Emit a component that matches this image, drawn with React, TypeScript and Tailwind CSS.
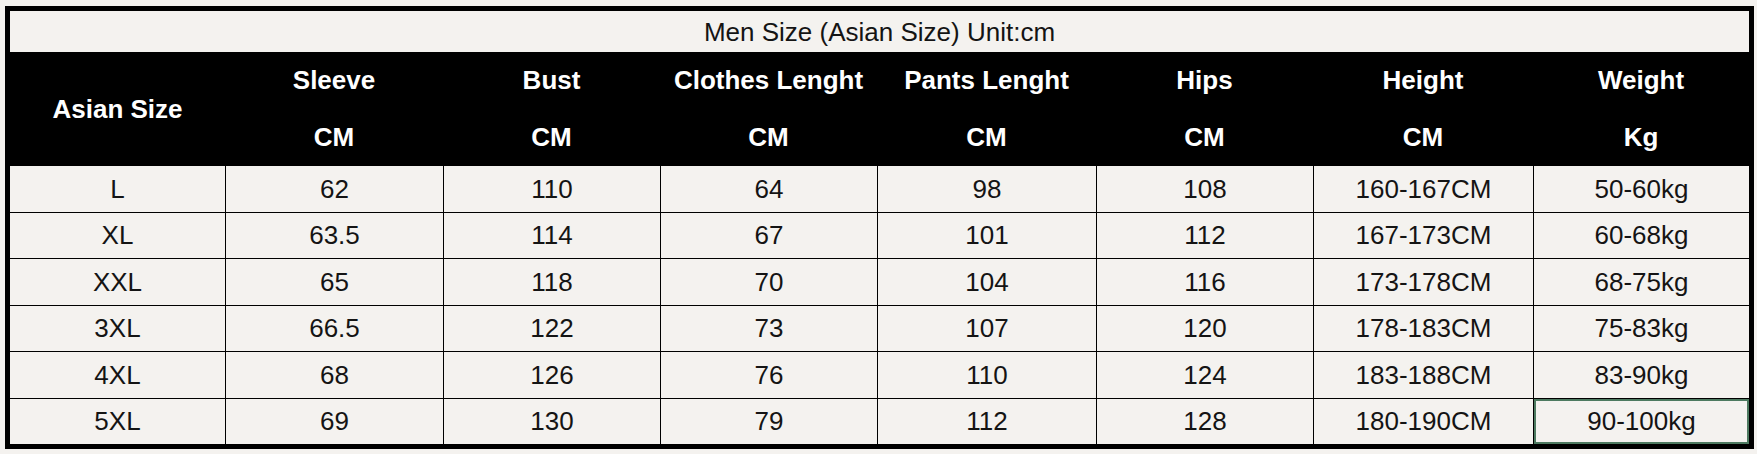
const columns = [
  { name: "Sleeve", unit: "CM" },
  { name: "Bust", unit: "CM" },
  { name: "Clothes Lenght", unit: "CM" },
  { name: "Pants Lenght", unit: "CM" },
  { name: "Hips", unit: "CM" },
  { name: "Height", unit: "CM" },
  { name: "Weight", unit: "Kg" },
];

const rows = [
  ["L", "62", "110", "64", "98", "108", "160-167CM", "50-60kg"],
  ["XL", "63.5", "114", "67", "101", "112", "167-173CM", "60-68kg"],
  ["XXL", "65", "118", "70", "104", "116", "173-178CM", "68-75kg"],
  ["3XL", "66.5", "122", "73", "107", "120", "178-183CM", "75-83kg"],
  ["4XL", "68", "126", "76", "110", "124", "183-188CM", "83-90kg"],
  ["5XL", "69", "130", "79", "112", "128", "180-190CM", "90-100kg"],
];

// column widths measured from the chart
const gridCols =
  "grid grid-cols-[215px_218px_217px_217px_219px_217px_220px_216px]";

const App = () => {
  return (
    <main
      className="min-h-screen bg-[#f4f2ef] pt-[6px] pl-[5px] text-[26px] text-[#141414]"
      style={{ fontFamily: '"Liberation Sans", Arial, sans-serif' }}
    >
      <div className="w-[1749px] border-[5px] border-black bg-[#f4f2ef]">
        {/* title */}
        <div className="h-[41px] flex items-center justify-center leading-none">
          Men Size (Asian Size) Unit:cm
        </div>

        {/* header */}
        <div
          className={`${gridCols} grid-rows-2 h-[114px] bg-black text-white font-bold leading-none`}
        >
          <div className="row-span-2 flex items-center justify-center">
            Asian Size
          </div>
          {columns.map((c) => (
            <div key={c.name} className="flex items-center justify-center pb-[2px]">
              {c.name}
            </div>
          ))}
          {columns.map((c) => (
            <div
              key={c.name + "-unit"}
              className="flex items-center justify-center pb-[2px]"
            >
              {c.unit}
            </div>
          ))}
        </div>

        {/* body */}
        <div className="flex flex-col h-[278px]">
          {rows.map((row, i) => (
            <div
              key={row[0]}
              className={
                i === 0
                  ? `flex-1 ${gridCols}`
                  : `flex-1 ${gridCols} border-t border-black`
              }
            >
              {row.map((cell, j) => (
                <div
                  key={j}
                  className={
                    j === 0
                      ? "relative flex items-center justify-center leading-none"
                      : "relative flex items-center justify-center leading-none border-l border-black"
                  }
                >
                  {cell}
                  {i === rows.length - 1 && j === row.length - 1 && (
                    <div className="absolute inset-0 border-2 border-[#4d7a60]" />
                  )}
                </div>
              ))}
            </div>
          ))}
        </div>
      </div>
    </main>
  );
};

export default App;
